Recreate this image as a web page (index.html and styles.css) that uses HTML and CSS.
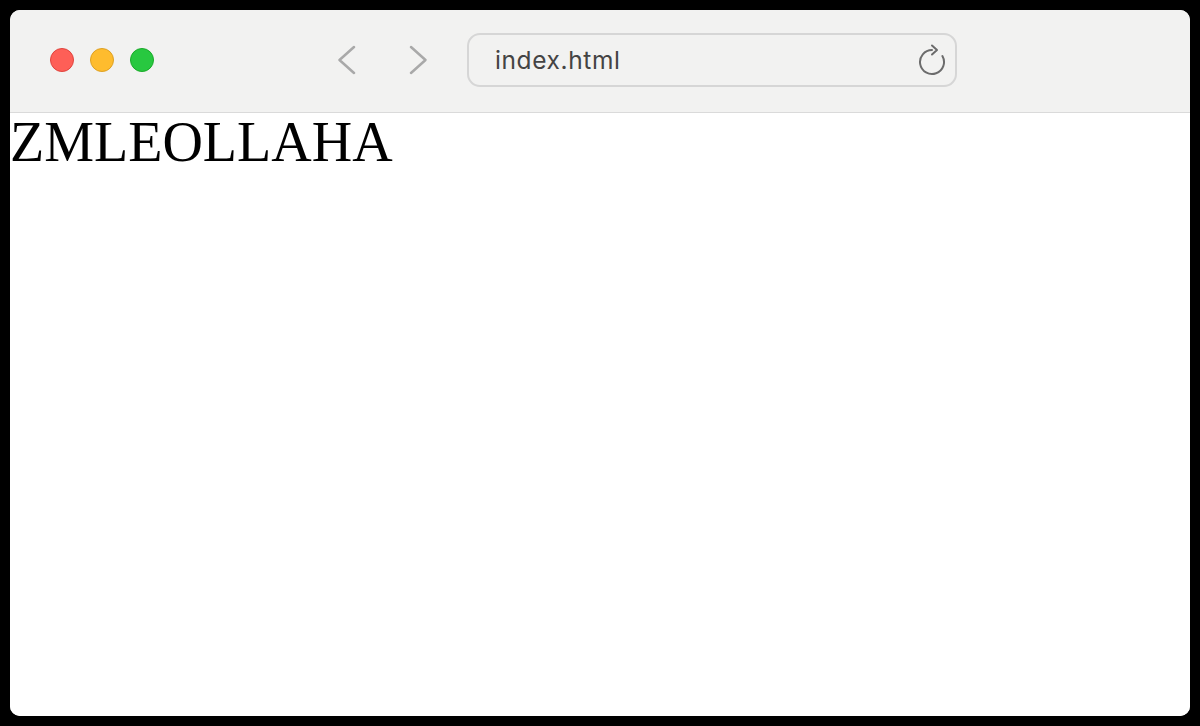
FILE: index.html
```html
<!DOCTYPE html>
<html lang="en">
<head>
    <meta charset="UTF-8">
    <title>index.html</title>
    <link rel="stylesheet" href="styles.css">
</head>
<body>
    <div class="window">
        <div class="toolbar">
            <div class="lights">
                <span class="light red"></span>
                <span class="light yellow"></span>
                <span class="light green"></span>
            </div>
            <div class="nav">
                <svg class="chev" width="20" height="30" viewBox="0 0 20 30">
                    <polyline points="16,2 1.5,15 16,28" />
                </svg>
                <svg class="chev" width="20" height="30" viewBox="0 0 20 30">
                    <polyline points="3,2 17.5,15 3,28" />
                </svg>
            </div>
            <div class="address">
                <span class="url">index.html</span>
                <svg class="reload" width="28" height="32" viewBox="0 0 28 32">
                    <path d="M14 6 A12 12 0 1 0 24.4 12" />
                    <polyline points="14,1.5 19,6 14,10.5" />
                </svg>
            </div>
        </div>
        <div class="page">
            <div class="title">ZMLEOLLAHA</div>
        </div>
    </div>
</body>
</html>
```

FILE: styles.css
```css
html, body {
    margin: 0;
    padding: 0;
    background: #000;
}
body {
    padding: 10px;
}
.window {
    width: 1180px;
    height: 706px;
    background: #fff;
    border-radius: 10px;
    overflow: hidden;
    display: flex;
    flex-direction: column;
}
.toolbar {
    flex: none;
    height: 103px;
    box-sizing: border-box;
    background: #f2f2f1;
    border-bottom: 1px solid #dadada;
    display: flex;
    align-items: center;
    padding: 0 0 2px 40px;
}
.lights {
    display: flex;
    gap: 16px;
}
.light {
    width: 24px;
    height: 24px;
    border-radius: 50%;
    box-sizing: border-box;
}
.red {
    background: #fe5f57;
    border: 1px solid #e0443e;
}
.yellow {
    background: #febc2e;
    border: 1px solid #dea123;
}
.green {
    background: #28c840;
    border: 1px solid #1aab29;
}
.nav {
    display: flex;
    gap: 50px;
    margin-left: 184px;
}
.chev polyline {
    fill: none;
    stroke: #a9a9a9;
    stroke-width: 2.5;
    stroke-linecap: round;
    stroke-linejoin: round;
}
.address {
    margin-left: 39px;
    width: 490px;
    height: 54px;
    box-sizing: border-box;
    border: 2px solid #d6d6d6;
    border-radius: 13px;
    display: flex;
    align-items: center;
    justify-content: space-between;
    padding: 0 9px 0 26px;
}
.url {
    font-family: Inter, "Noto Sans", sans-serif;
    font-size: 24.5px;
    color: #444;
    letter-spacing: 0.6px;
}
.reload path,
.reload polyline {
    fill: none;
    stroke: #6c6c6c;
    stroke-width: 2;
    stroke-linecap: round;
    stroke-linejoin: round;
}
.page {
    flex: 1;
    background: #fff;
}
.title {
    font-family: "Liberation Serif", "Times New Roman", serif;
    font-size: 56px;
    line-height: 59px;
    color: #000;
}
```
